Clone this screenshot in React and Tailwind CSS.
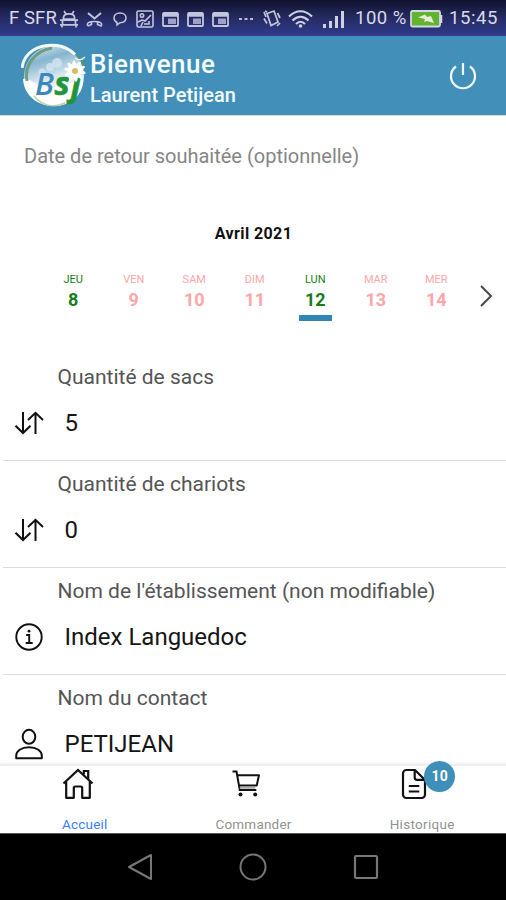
import clsx from 'clsx';

const days = [
    { name: 'JEU', num: 8, open: true },
    { name: 'VEN', num: 9 },
    { name: 'SAM', num: 10 },
    { name: 'DIM', num: 11 },
    { name: 'LUN', num: 12, open: true, selected: true },
    { name: 'MAR', num: 13 },
    { name: 'MER', num: 14 }
];

const fields = [
    { label: 'Quantité de sacs', value: '5', icon: SwapIcon },
    { label: 'Quantité de chariots', value: '0', icon: SwapIcon },
    { label: "Nom de l'établissement (non modifiable)", value: 'Index Languedoc', icon: InfoIcon },
    { label: 'Nom du contact', value: 'PETIJEAN', icon: PersonIcon }
];

function SwapIcon() {
    return (
        <svg width="30" height="26" viewBox="0 0 30 26" fill="none" stroke="#111" strokeWidth="2">
            <path d="M9 2v21M1.500 15.800 9 23l7.500-7.200" />
            <path d="M21.500 24V3M14 10 21.500 2.800 29 10" />
        </svg>
    );
}

function InfoIcon() {
    return (
        <svg width="30" height="28" viewBox="0 0 30 28" fill="none" stroke="#111" strokeWidth="1.9">
            <circle cx="15" cy="14" r="12.700" />
            <path d="M12.200 12h3v7.800M11.700 20h7" />
            <circle cx="15" cy="8.200" r="1.400" fill="#111" stroke="none" />
        </svg>
    );
}

function PersonIcon() {
    return (
        <svg width="30" height="32" viewBox="0 0 30 32" fill="none" stroke="#111" strokeWidth="2">
            <ellipse cx="15" cy="8.800" rx="6.300" ry="7" />
            <path d="M2.200 30.300h25.600v-2.600c0-4.600-5-8.400-12.800-8.400S2.200 23.100 2.200 27.700z" strokeLinejoin="round" />
        </svg>
    );
}

function HomeIcon() {
    return (
        <svg width="32" height="32" viewBox="0 0 32 32" fill="none" stroke="#111" strokeWidth="2.200">
            <path d="M1.500 15.500 16 2l14.500 13.500" />
            <path d="M4.200 13.500v16.300h7.600V20c0-1 .5-1.500 1.500-1.500h5.400c1 0 1.500.5 1.500 1.500v9.800h7.600V13.500" strokeLinejoin="round" />
            <path d="M21.800 6.500V3h4.400v8.500" />
        </svg>
    );
}

function CartIcon() {
    return (
        <svg width="30" height="32" viewBox="0 0 30 32" fill="none" stroke="#111" strokeWidth="2">
            <path d="M1.500 3.500h4l3.300 18.600h16.500" />
            <path d="M6.500 7.200h21.500l-2.300 10.300H8.200" strokeLinejoin="round" />
            <path d="M8.800 19.700h15.500" stroke="#aaa" />
            <circle cx="9.500" cy="26.500" r="2" fill="#111" stroke="none" />
            <circle cx="24.200" cy="26.500" r="2" fill="#111" stroke="none" />
        </svg>
    );
}

function DocIcon() {
    return (
        <svg width="26" height="32" viewBox="0 0 26 32" fill="none" stroke="#111" strokeWidth="2.200">
            <path d="M14 2H5.500A3.500 3.500 0 0 0 2 5.500v21A3.500 3.500 0 0 0 5.500 30h15a3.500 3.500 0 0 0 3.500-3.500V12z" />
            <path d="M13.700 2v7.500c0 1.500.8 2.300 2.300 2.300h8M7.800 18h10.500M7.800 23.500h10.500" />
        </svg>
    );
}

function Logo() {
    return (
        <svg width="66" height="66" viewBox="0 0 66 66">
            <defs>
                <linearGradient id="globe" x1="0" y1="0" x2="0.3" y2="1">
                    <stop offset="0" stopColor="#e3eff3" />
                    <stop offset="0.3" stopColor="#86b5ce" />
                    <stop offset="0.62" stopColor="#d9e9f0" />
                    <stop offset="1" stopColor="#ffffff" />
                </linearGradient>
            </defs>
            <circle cx="33" cy="33" r="30" fill="url(#globe)" />
            <path d="M2 36C11 34 15 47 34 44s20-7 28-8c1 15-12 27-29 27C16 63 3 52 2 36z" fill="#fff" />
            <path d="M6 38C3 23 13 8 31 5" fill="none" stroke="#6e9d80" strokeWidth="3" />
            <path d="M1 25C3 10 16 1 36 2.500c9 1 14 5 18 9" fill="none" stroke="#f3f8f4" strokeWidth="3" />
            <path d="M57 12c4 5 5.500 8 6 14" fill="none" stroke="#57956a" strokeWidth="2" />
            <path d="M13 53c8 10 20 12 31 7" fill="none" stroke="#bdd3aa" strokeWidth="1.500" />
            <g fill="#d4e6f5" opacity="0.8">
                <circle cx="36" cy="20" r="5" />
                <circle cx="29" cy="24" r="4" />
                <circle cx="21" cy="29" r="3.500" />
            </g>
            <g fontFamily="Open Sans, sans-serif" fontStyle="italic" fontWeight="700">
                <text x="14" y="52" fontSize="31" fontWeight="600" fill="#3f87ba">B</text>
                <text x="33.500" y="52" fontSize="32" fill="#23943b" stroke="#23943b" strokeWidth="0.600">s</text>
                <text x="50" y="53" fontSize="33" fill="#23943b" stroke="#23943b" strokeWidth="0.600">j</text>
            </g>
            <g fill="#fff">
                {[12, 48, 84, 120, 156].map((a) => (
                    <ellipse key={a} cx="54" cy="28" rx="11" ry="2.600" transform={`rotate(${a} 54 28)`} />
                ))}
            </g>
            <circle cx="54" cy="28" r="3" fill="#dcbb60" />
            <path d="M54 15q5 4 10-1" fill="none" stroke="#e8f3f7" strokeWidth="1.500" />
        </svg>
    );
}

function WindowIcon() {
    return (
        <svg width="17" height="15" viewBox="0 0 17 15" fill="none" stroke="#c3c5dc" strokeWidth="1.800">
            <rect x="1" y="1" width="15" height="13" rx="1" />
            <path d="M1 3h15" strokeWidth="3.500" />
            <path d="M6 6.500h8v5.500H6z" fill="#9fa2c8" stroke="none" />
        </svg>
    );
}

function StatusBar() {
    return (
        <div className="flex h-9 shrink-0 items-center bg-linear-to-b from-[#10132f] via-[#252b63] to-[#303c8e] pt-[2px] pl-[9px] text-[18.5px] whitespace-nowrap text-[#d9daea]">
            <span className="w-[51px] text-[18.5px] tracking-[0.1px]">F SFR</span>
            <svg width="18" height="18" viewBox="0 0 18 18" fill="none" stroke="#c3c5dc" strokeWidth="1.700">
                <path d="M4 1l2 3M14 1l-2 3M3.500 9V7.500C3.500 5 6 3.800 9 3.800s5.500 1.200 5.500 3.700V9zM0 10.200h18M2.500 10v5h13v-5M0 14.800h18M2 17.500v-3M16 17.500v-3" />
            </svg>
            <svg className="ml-[8px]" width="17" height="17" viewBox="0 0 17 17" fill="none" stroke="#c3c5dc" strokeWidth="2">
                <path d="M2 2l6.500 5.500L15 2" />
                <path d="M2 15c-2-3 1-4.500 6.500-4.500S17 12 15 15l-3.500-1.500V11M2 15l3.500-1.500V11" strokeWidth="1.600" />
            </svg>
            <svg className="ml-[10px]" width="14" height="16" viewBox="0 0 14 16" fill="none" stroke="#c3c5dc" strokeWidth="1.500">
                <path d="M4 11.500C2 10.500 1 9 1 7c0-3 2.500-5 6-5s6 2 6 4.800c0 3-2.500 4.900-6 4.900L4 14z" />
            </svg>
            <svg className="ml-[9px]" width="18" height="18" viewBox="0 0 18 18" fill="none" stroke="#c3c5dc" strokeWidth="1.600">
                <rect x="1" y="1" width="16" height="16" rx="1.500" />
                <circle cx="6" cy="5.500" r="1.700" />
                <path d="M2 12l4-2 3 1 6-6M5 16l2-4M8 14h5v-3" />
            </svg>
            <div className="ml-[8px] flex gap-[8px]">
                <WindowIcon />
                <WindowIcon />
                <WindowIcon />
            </div>
            <svg className="ml-[10px]" width="15" height="4" viewBox="0 0 15 4" fill="#b9bbd6">
                <path d="M0 1h3v2H0zM5.500 1h3v2h-3zM11 1h3v2h-3z" />
            </svg>
            <svg className="ml-[9px]" width="18" height="20" viewBox="0 0 18 20" fill="none" stroke="#c3c5dc" strokeWidth="1.700">
                <path d="M4 4.500l7-2.500 4 11-7 3.500z" />
                <path d="M1 3l2 5M1 9.500l3 5M14.500 4l2.500 5M14 17l3-3M2 2l2 1" />
            </svg>
            <svg className="ml-[7px]" width="25" height="20" viewBox="0 0 25 20" fill="none" stroke="#cfd1e3" strokeWidth="2.200">
                <path d="M1 7.500C8 .500 17 .500 24 7.500M4.500 11.500c5-5 11-5 16 0M8 15c3-3 6-3 9 0" />
                <circle cx="12.500" cy="17" r="1.800" fill="#cfd1e3" stroke="none" />
            </svg>
            <svg className="ml-[10px]" width="22" height="19" viewBox="0 0 22 19" fill="#cfd1e3">
                <path d="M0 14h3v4H0zM6 11h3v7H6zM12 6h3v12h-3zM18 1h3v17h-3z" />
            </svg>
            <span className="ml-[10px] w-[55px] tracking-[0.5px]">100 %</span>
            <svg width="33" height="18" viewBox="0 0 33 18">
                <rect x="1" y="1" width="29" height="15.500" rx="1.500" fill="#62b32f" stroke="#d5d7e2" strokeWidth="1.800" />
                <path d="M31 5v8" stroke="#d5d7e2" strokeWidth="2.500" />
                <path d="M8 7.500l7-3 2 2.500 4-1 3 7-7-2-3 1 1-3z" fill="#e6edda" />
            </svg>
            <span className="ml-[6px] tracking-[0.6px]">15:45</span>
        </div>
    );
}

function Header() {
    return (
        <header className="flex h-[79px] shrink-0 items-center bg-[#4290b9] pr-[29px] pl-[21px] text-[#f3fbff]">
            <Logo />
            <div className="ml-[3px] flex-1 pt-[7px] font-medium">
                <h1 className="text-[26px] leading-[30px] tracking-[0.5px]">Bienvenue</h1>
                <p className="mt-[1px] text-[20px] leading-[30px]">Laurent Petijean</p>
            </div>
            <svg width="28" height="28" viewBox="0 0 28 28" fill="none" stroke="#effaff" strokeWidth="2.200">
                <path d="M7 4.500a12 12 0 1 0 14 0M14 1v12" />
            </svg>
        </header>
    );
}

function Calendar() {
    return (
        <section className="border-t border-[#d8d8d8]">
            <h2 className="mt-[26px] pl-[24px] text-[20px] leading-[28px] text-[#858585]">Date de retour souhaitée (optionnelle)</h2>
            <p className="mt-[50px] pl-px text-center text-[16px] leading-[28px] font-bold tracking-[0.4px] text-[#111]">Avril 2021</p>
            <div className="mt-[25px] flex h-[50px] pl-[43px]">
                {days.map((d) => (
                    <div
                        key={d.num}
                        className={clsx('flex w-[60.5px] flex-col items-center', d.open ? 'text-[#177d17]' : 'text-[#ffa6a9]')}
                    >
                        <span className="text-[11px] leading-[14px]">{d.name}</span>
                        <span className="mt-[3px] text-[18px] leading-[20px] font-bold">{d.num}</span>
                        {d.selected && <div className="mt-[5px] h-[6px] w-[33px] bg-[#2f86b5]" />}
                    </div>
                ))}
                <svg className="mt-[12px] ml-[12px]" width="14" height="22" viewBox="0 0 14 22" fill="none" stroke="#484848" strokeWidth="2">
                    <path d="M2 1l10 10L2 21" />
                </svg>
            </div>
        </section>
    );
}

function Field({ label, value, icon: Icon }) {
    return (
        <div className="ml-[3px] h-[107px] shrink-0 border-b border-[#dddddd] pt-[9px]">
            <div className="pl-[54.5px] text-[21px] leading-[28px] text-[#555]">{label}</div>
            <div className="mt-[15px] flex h-[34px] items-center pl-[11px]">
                <Icon />
                <span className="ml-[20.500px] text-[24px] leading-[34px] text-[#151515]">{value}</span>
            </div>
        </div>
    );
}

function TabBar() {
    return (
        <nav className="grid h-[69px] shrink-0 grid-cols-3 border-t-2 border-[#eeeeee] bg-white text-center text-[13.5px] leading-[16px] text-[#929292] shadow-[0_-1px_2px_#eeeeee]">
            <div className="flex flex-col items-center pt-[2px] text-[#3880ff]">
                <div className="mr-[13px]">
                    <HomeIcon />
                </div>
                <span className="mt-[16px] pl-px tracking-[0.2px]">Accueil</span>
            </div>
            <div className="flex flex-col items-center pt-[2px]">
                <div className="mr-[13px]">
                    <CartIcon />
                </div>
                <span className="mt-[16px] pl-px tracking-[0.2px]">Commander</span>
            </div>
            <div className="flex flex-col items-center pt-[2px]">
                <div className="relative mr-[15px]">
                    <DocIcon />
                    <span className="absolute -top-[7px] left-[23px] h-[31px] w-[31px] rounded-full bg-[#3f90b8] text-[14px] leading-[31px] font-bold text-white">
                        10
                    </span>
                </div>
                <span className="mt-[16px] pl-px tracking-[0.3px]">Historique</span>
            </div>
        </nav>
    );
}

function AndroidNav() {
    return (
        <div className="flex h-[67px] shrink-0 items-center justify-center gap-[85px] border-t border-[#555] bg-black">
            <svg width="28" height="28" viewBox="0 0 28 28" fill="none" stroke="#777" strokeWidth="2">
                <path d="M25 2v24L3 14z" strokeLinejoin="round" />
            </svg>
            <svg width="28" height="28" viewBox="0 0 28 28" fill="none" stroke="#777" strokeWidth="2">
                <circle cx="14" cy="14" r="12.500" />
            </svg>
            <svg width="28" height="28" viewBox="0 0 28 28" fill="none" stroke="#777" strokeWidth="2.200">
                <rect x="3" y="3" width="22" height="22" rx="1" />
            </svg>
        </div>
    );
}

export default function App() {
    return (
        <div className="flex h-[900px] w-[506px] flex-col overflow-hidden bg-white font-['Roboto',sans-serif]">
            <StatusBar />
            <Header />
            <main className="min-h-0 flex-1 overflow-hidden">
                <Calendar />
                <div className="mt-[31px]">
                    {fields.map((f) => (
                        <Field key={f.label} {...f} />
                    ))}
                </div>
            </main>
            <TabBar />
            <AndroidNav />
        </div>
    );
}
